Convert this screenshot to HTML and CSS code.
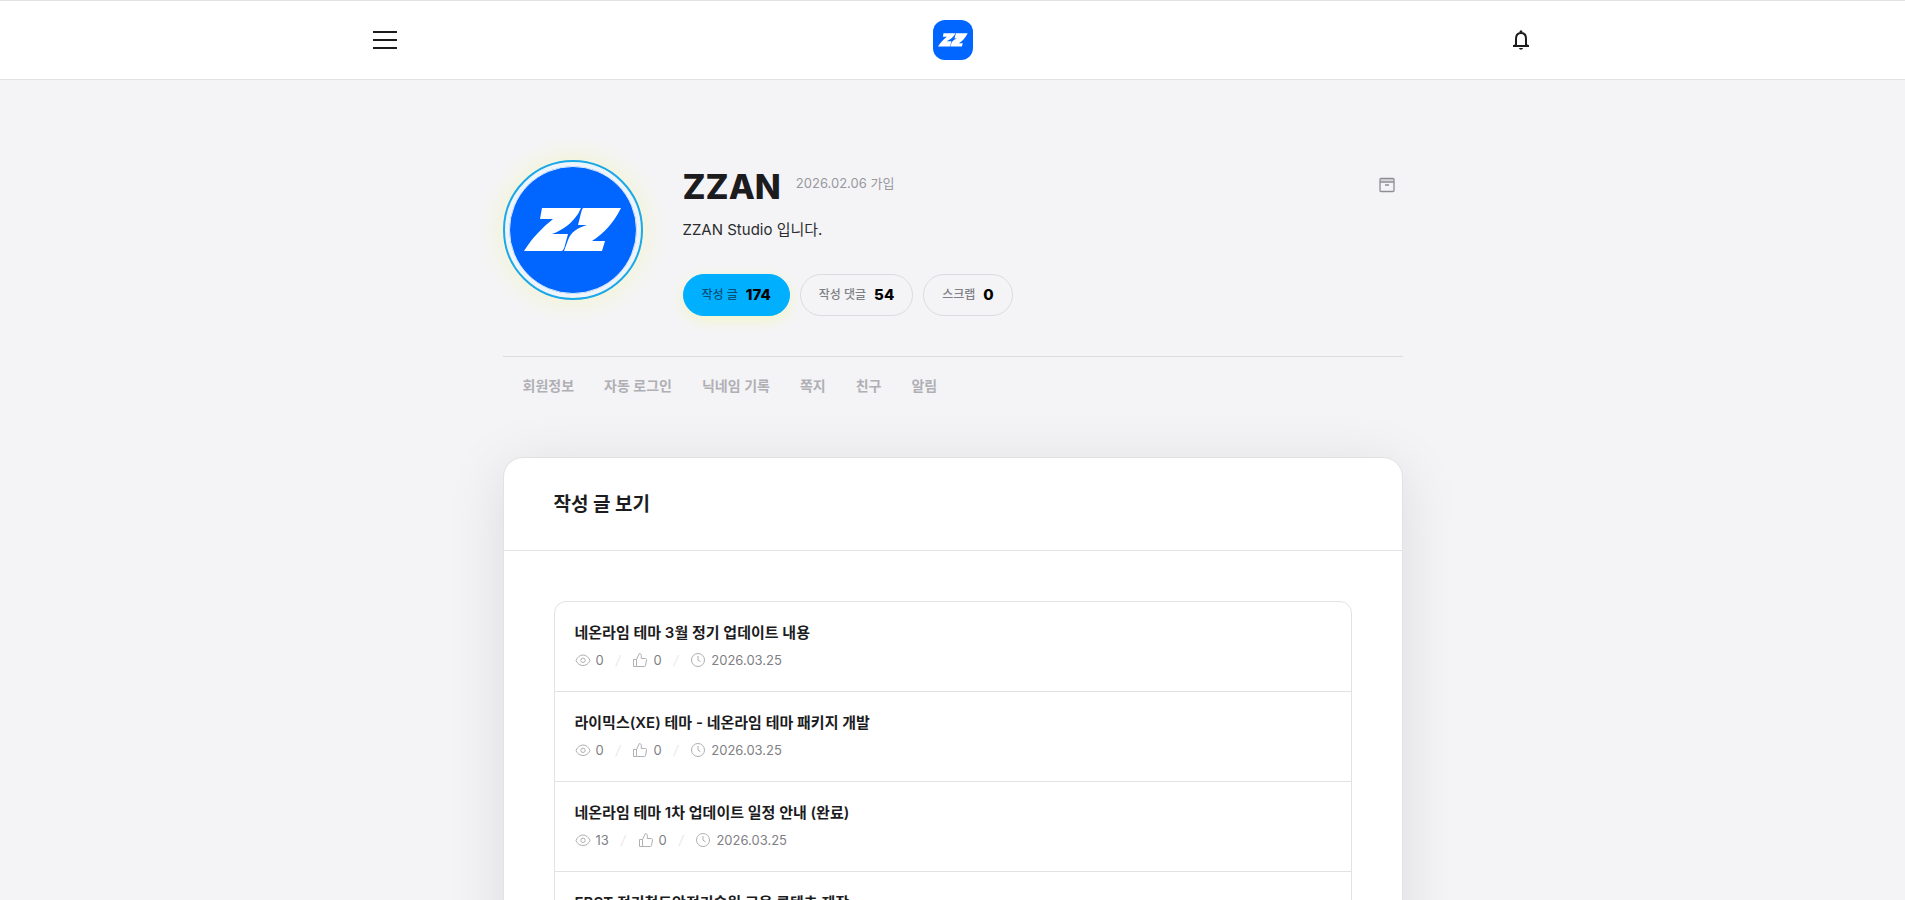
FILE: index.html
```html
<!DOCTYPE html>
<html lang="ko">
<head>
<meta charset="utf-8">
<title>ZZAN</title>
<meta name="viewport" content="width=device-width, initial-scale=1">
<link rel="stylesheet" href="styles.css">
</head>
<body>
<svg class="sprite" aria-hidden="true">
  <symbol id="zz" viewBox="0 0 98 44">
    <path d="M18 0H57L54 6C47 16 39 22 28 26H44L41 37C40 41 39 43 37 43H0C9 29 18 20 29 11H16Z"/>
    <path d="M60 0H97C89 16 80 25 68 33H81L78 43H40L44 32C47 24 53 20 63 17H54L57 5C58 2 58 0 60 0Z"/>
  </symbol>
  <symbol id="eye" viewBox="0 0 16 16">
    <path d="M1 8.500C2.500 5 5 3 8 3s5.500 2 7 5.500C13.500 12 11 13.500 8 13.500S2.500 12 1 8.500Z"/>
    <circle cx="8" cy="8.300" r="2.200"/>
  </symbol>
  <symbol id="thumb" viewBox="0 0 16 16">
    <path d="M1.500 7.500h3v7h-3zM4.500 7.500 7.300 1.500c1.200 0 2 .8 2 2v3h4c.8 0 1.400.7 1.200 1.500l-.9 5.300c-.1.700-.6 1.200-1.300 1.200H4.500"/>
  </symbol>
  <symbol id="clock" viewBox="0 0 16 16">
    <circle cx="8" cy="8" r="6.500"/><path d="M8 4v4.200l2.500 1.500"/>
  </symbol>
</svg>

<header class="topbar">
  <div class="topbar-inner">
    <button class="icon-button" type="button" aria-label="메뉴">
      <svg class="icon-menu" viewBox="0 0 24 24"><path d="M0 4h24M0 12h24M0 20h24"/></svg>
    </button>
    <a class="brand" href="#" aria-label="ZZAN">
      <svg class="brand-mark"><use href="#zz"/></svg>
    </a>
    <button class="icon-button" type="button" aria-label="알림">
      <svg class="icon-bell" viewBox="0 0 24 24"><path d="M4 18h16M7 18v-7c0-3.700 1.800-6 5-6s5 2.300 5 6v7"/><path class="solid" d="M10.500 4.500C10.500 1.600 13.500 1.600 13.500 4.500zM10 20h4c-.5 2.200-3.500 2.200-4 0zM4 17.500l2.500-1.500v1.500zM20 17.500l-2.500-1.500v1.500z"/></svg>
    </button>
  </div>
</header>

<main class="page">
  <section class="profile">
    <div class="avatar"><div class="avatar-image"><svg class="avatar-mark"><use href="#zz"/></svg></div></div>
    <div class="profile-body">
      <div class="name-row">
        <h1 class="name">ZZAN</h1>
        <span class="joined">2026.02.06 가입</span>
        <button class="archive" type="button" aria-label="보관함">
          <svg viewBox="0 0 16 16"><path class="lid" d="M1.500 1.500h13v3h-13z"/><rect x="1" y="1.500" width="14" height="13" rx="1"/><path d="M1 5h14M6 8h4"/></svg>
        </button>
      </div>
      <p class="bio">ZZAN Studio 입니다.</p>
      <nav class="stats">
        <a class="stat stat-active" href="#">작성 글 <strong>174</strong></a>
        <a class="stat" href="#">작성 댓글 <strong>54</strong></a>
        <a class="stat" href="#">스크랩 <strong>0</strong></a>
      </nav>
    </div>
  </section>

  <nav class="tabs">
    <a href="#">회원정보</a>
    <a href="#">자동 로그인</a>
    <a href="#">닉네임 기록</a>
    <a href="#">쪽지</a>
    <a href="#">친구</a>
    <a href="#">알림</a>
  </nav>

  <section class="card">
    <h2 class="card-title">작성 글 보기</h2>
    <ul class="posts">
      <li class="post">
        <a class="post-title" href="#">네온라임 테마 3월 정기 업데이트 내용</a>
        <div class="meta"><span><svg><use href="#eye"/></svg>0</span><i>/</i><span><svg><use href="#thumb"/></svg>0</span><i>/</i><span><svg><use href="#clock"/></svg>2026.03.25</span></div>
      </li>
      <li class="post">
        <a class="post-title" href="#">라이믹스(XE) 테마 - 네온라임 테마 패키지 개발</a>
        <div class="meta"><span><svg><use href="#eye"/></svg>0</span><i>/</i><span><svg><use href="#thumb"/></svg>0</span><i>/</i><span><svg><use href="#clock"/></svg>2026.03.25</span></div>
      </li>
      <li class="post">
        <a class="post-title" href="#">네온라임 테마 1차 업데이트 일정 안내 (완료)</a>
        <div class="meta"><span><svg><use href="#eye"/></svg>13</span><i>/</i><span><svg><use href="#thumb"/></svg>0</span><i>/</i><span><svg><use href="#clock"/></svg>2026.03.25</span></div>
      </li>
      <li class="post">
        <a class="post-title" href="#">EBST 전기철도안전기술원 교육 콘텐츠 제작</a>
      </li>
    </ul>
  </section>
</main>
</body>
</html>
```
FILE: styles.css
```css
* { box-sizing: border-box; }
html { scrollbar-width: none; }
body {
  margin: 0;
  background: #f4f4f7;
  color: #1c1c1e;
  font-family: Inter, "Noto Sans CJK KR", sans-serif;
  font-size: 14px;
  line-height: 20px;
}
a { color: inherit; text-decoration: none; }
button { padding: 0; border: 0; background: none; color: inherit; }
svg { display: block; fill: none; stroke: currentColor; }
h1, h2, p, ul { margin: 0; padding: 0; }
.sprite { display: none; }

.topbar {
  border-top: 1px solid #e2e2e4;
  border-bottom: 1px solid #e2e2e4;
  background: #fff;
}
.topbar-inner {
  display: flex;
  align-items: center;
  justify-content: space-between;
  max-width: 1160px;
  height: 78px;
  margin: 0 auto;
}
.icon-button svg { width: 24px; height: 24px; stroke-width: 2; }
.solid { fill: currentColor; stroke: none; }
.brand {
  display: grid;
  place-items: center;
  width: 40px;
  height: 40px;
  border-radius: 12px;
  background: #0066ff;
}
.brand-mark { width: 30px; height: 14px; }
.brand-mark, .avatar-mark { color: #fff; fill: #fff; stroke: none; }

.page { max-width: 900px; margin: 0 auto; padding-top: 80px; }
.profile {
  display: flex;
  gap: 40px;
  padding-bottom: 40px;
  border-bottom: 1px solid #dcdcde;
}
.avatar {
  flex: none;
  width: 140px;
  height: 140px;
  padding: 4px;
  border: 2px solid #1ba8e8;
  border-radius: 50%;
  background: #edf4fc;
  box-shadow: 0 0 30px rgba(238, 255, 0, 0.2);
}
.avatar-image {
  display: grid;
  place-items: center;
  height: 100%;
  border: 1px solid #d5e5fb;
  border-radius: 50%;
  background: #0066ff;
}
.avatar-mark { width: 98px; height: 44px; }
.profile-body { flex: 1; padding-top: 5px; }
.name-row { display: flex; align-items: center; gap: 15px; }
.name { font-size: 34px; line-height: 44px; font-weight: 800; }
.joined { padding-bottom: 8px; color: #98989d; font-size: 13px; }
.archive { margin-left: auto; padding: 0 8px 4px; color: #8e8e93; }
.archive svg { width: 16px; height: 16px; stroke-width: 1.3; }
.lid { fill: #d8d8dc; stroke: none; }
.bio { padding: 9px 0 32px; color: #2c2c2e; font-size: 15px; line-height: 24px; }
.stats { display: flex; gap: 10px; }
.stat {
  display: flex;
  align-items: center;
  gap: 8px;
  height: 42px;
  padding: 0 18px;
  border: 1px solid #dcdce0;
  border-radius: 21px;
  color: #808085;
  font-size: 12px;
  font-weight: 500;
}
.stat strong { color: #000; font-size: 15px; font-weight: 800; }
.stat-active {
  border-color: #00b0ff;
  background: #00b0ff;
  color: #075078;
  box-shadow: 0 4px 15px rgba(238, 255, 0, 0.2);
}

.tabs {
  display: flex;
  gap: 30px;
  padding: 19px 20px 21px;
  color: #b0b0b4;
  font-weight: 600;
}

.card {
  margin-top: 40px;
  border: 1px solid #e2e2e4;
  border-radius: 20px;
  background: #fff;
  box-shadow: 0 10px 60px rgba(0, 0, 0, 0.1);
}
.card-title {
  padding: 31px 50px 29px;
  border-bottom: 1px solid #e2e2e4;
  font-size: 19px;
  line-height: 32px;
  font-weight: 700;
}
.posts {
  margin: 50px;
  border: 1px solid #e2e2e4;
  border-radius: 12px;
  list-style: none;
}
.post { padding: 20px 20px 21px; }
.post + .post { border-top: 1px solid #e2e2e4; }
.post-title {
  display: block;
  color: #1c1c1e;
  font-size: 15px;
  line-height: 22px;
  font-weight: 600;
}
.meta {
  display: flex;
  align-items: center;
  gap: 12px;
  padding-top: 6px;
  color: #808085;
  font-size: 13px;
}
.meta span { display: flex; align-items: center; gap: 5px; }
.meta i { color: #e8e8ea; }
.meta svg { width: 16px; height: 16px; color: #b0b0b4; }
```
